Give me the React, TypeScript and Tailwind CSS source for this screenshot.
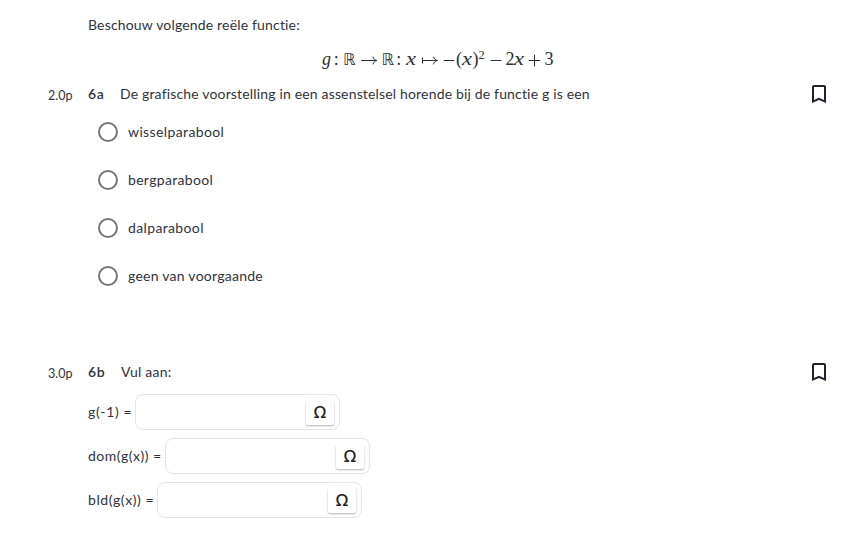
import React from "react";

function Bookmark() {
  return (
    <svg width="24" height="24" viewBox="0 0 24 24" fill="#20232b" className="block shrink-0">
      <path d="M17 3H7c-1.1 0-1.99.9-1.99 2L5 21l7-3 7 3V5c0-1.1-.9-2-2-2zm0 15l-5-2.18L7 18V5h10v13z" />
    </svg>
  );
}

function Formula() {
  return (
    <svg
      width="236"
      height="28"
      viewBox="320 45 236 28"
      fill="#2b2f38"
      className="block font-['Liberation_Serif',serif] text-[18px]"
    >
      <text x="322" y="65" fontStyle="italic" textLength="9">g</text>
      <text x="333.8" y="65">:</text>
      <text x="343.3" y="65.3" fontSize="16" textLength="12.5" lengthAdjust="spacingAndGlyphs" fontFamily="DejaVu Sans">ℝ</text>
      <text x="381.8" y="65.3" fontSize="16" textLength="12.5" lengthAdjust="spacingAndGlyphs" fontFamily="DejaVu Sans">ℝ</text>
      <text x="396.2" y="65">:</text>
      <text x="406" y="65" fontStyle="italic" textLength="10" lengthAdjust="spacingAndGlyphs">x</text>
      <g fill="none" stroke="#2b2f38" strokeWidth="1" strokeLinecap="round">
        <path d="M361.5 60.5H376.5M373 57C373.7 59 375 60 376.8 60.5C375 61 373.7 62 373 64" />
        <path d="M422.5 60.5H437M422.5 58V63M433.5 57C434.2 59 435.5 60 437.3 60.5C435.5 61 434.2 62 433.5 64" />
        <path d="M444 60.5H454M491 60.5H501M529 60.5H540M534.5 55V66" />
      </g>
      <text x="456" y="65">(</text>
      <text x="462" y="65" fontStyle="italic" textLength="10" lengthAdjust="spacingAndGlyphs">x</text>
      <text x="472.5" y="65">)</text>
      <text x="478.5" y="58.5" fontSize="12.5">2</text>
      <text x="505.5" y="65">2</text>
      <text x="514" y="65" fontStyle="italic" textLength="10" lengthAdjust="spacingAndGlyphs">x</text>
      <text x="544.5" y="65">3</text>
    </svg>
  );
}

function QuestionHeader(props: { points: string; label: string; gap: string; children: React.ReactNode }) {
  return (
    <div className="flex h-6 items-center pr-5">
      <span className="w-[40px] pt-[4px] text-[12.5px]">{props.points}</span>
      <span className={"font-semibold tracking-[0.6px] " + props.gap}>{props.label}</span>
      <span className="flex-1">{props.children}</span>
      <Bookmark />
    </div>
  );
}

function Option(props: { label: string; spacing: string }) {
  return (
    <label className="flex h-12 items-center gap-[10px] pl-[50px]">
      <span className="size-5 rounded-full border-2 border-[#757575]" />
      <span className={props.spacing}>{props.label}</span>
    </label>
  );
}

function Answer(props: { label: string; width: string }) {
  return (
    <div className="flex h-9 items-center pl-10">
      <span className={props.width}>{props.label}</span>
      <div className="flex h-9 w-[205px] items-center justify-end rounded-lg border border-[#e4e4e6] pr-[5px]">
        <button className="flex h-[25px] w-[28px] items-center justify-center rounded-[2px] bg-white font-['Noto_Sans',sans-serif] text-[17px] font-medium tracking-normal text-[#222] shadow-[0_1px_2px_rgba(0,0,0,0.3)]">
          Ω
        </button>
      </div>
    </div>
  );
}

export default function App() {
  return (
    <main className="h-[559px] w-[851px] overflow-hidden bg-white pt-[15px] pl-12 font-['Lato',sans-serif] text-[14px] leading-5 whitespace-nowrap text-[#2f333c]">
      <p className="pl-10 tracking-[0.17px]">Beschouw volgende reële functie:</p>
      <div className="mt-[10px] ml-[272px]"><Formula /></div>
      <div className="mt-[9px]">
        <QuestionHeader points="2.0p" label="6a" gap="w-8">
          <span className="tracking-[0.165px]">De grafische voorstelling in een assenstelsel horende bij de functie g is een</span>
        </QuestionHeader>
      </div>
      <div className="mt-[2px]">
        <Option label="wisselparabool" spacing="tracking-[0.38px]" />
        <Option label="bergparabool" spacing="tracking-[0.32px]" />
        <Option label="dalparabool" spacing="tracking-[0.36px]" />
        <Option label="geen van voorgaande" spacing="tracking-[0.25px]" />
      </div>
      <div className="mt-[60px]">
        <QuestionHeader points="3.0p" label="6b" gap="w-[33px]">
          <span className="tracking-[0.22px]">Vul aan:</span>
        </QuestionHeader>
      </div>
      <div className="mt-[10px] flex flex-col gap-2">
        <Answer label="g(-1) =" width="w-[47px] tracking-[0.65px]" />
        <Answer label="dom(g(x)) =" width="w-[77px] tracking-[0.5px]" />
        <Answer label="bld(g(x)) =" width="w-[69px] tracking-[0.57px]" />
      </div>
    </main>
  );
}
